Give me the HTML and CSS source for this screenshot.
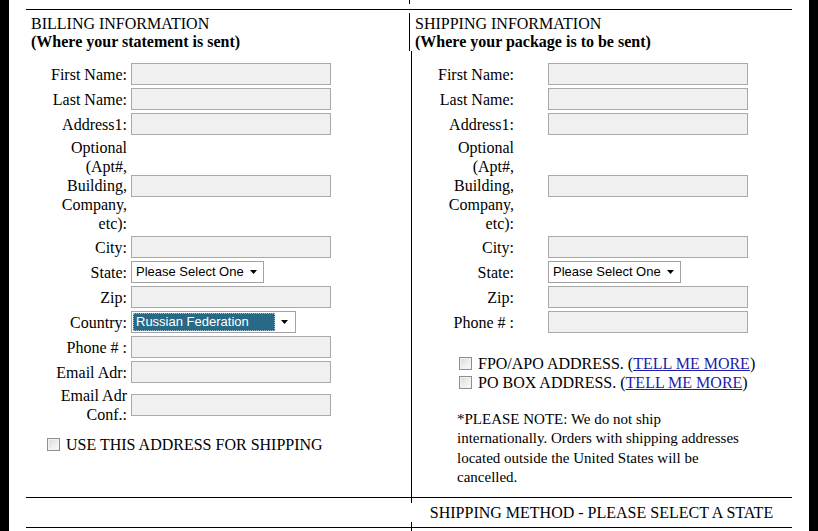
FILE: index.html
```html
<!DOCTYPE html>
<html lang="en">
<head>
<meta charset="utf-8">
<title>Billing and Shipping Information</title>
<link rel="stylesheet" href="styles.css">
</head>
<body>
<div class="page">
  <div class="stub stub-top"></div>
  <div class="rule"></div>
  <div class="columns">
    <section class="billing">
      <div class="sec-head">
        <div class="sec-title">BILLING INFORMATION</div>
        <div class="sec-sub">(Where your statement is sent)</div>
      </div>
      <div class="form form-billing">
        <label class="lbl">First Name:</label><input class="field" type="text">
        <label class="lbl">Last Name:</label><input class="field" type="text">
        <label class="lbl">Address1:</label><input class="field" type="text">
        <label class="lbl">Optional (Apt#, Building, Company, etc):</label><input class="field" type="text">
        <label class="lbl">City:</label><input class="field" type="text">
        <label class="lbl">State:</label>
        <span class="select select-state"><span class="select-text">Please Select One</span><svg class="arrow" width="7" height="4" viewBox="0 0 7 4"><path d="M0 0H7L3.5 4Z" fill="#000"/></svg></span>
        <label class="lbl">Zip:</label><input class="field" type="text">
        <label class="lbl">Country:</label>
        <span class="select select-country"><span class="select-text selected">Russian Federation</span><svg class="arrow" width="7" height="4" viewBox="0 0 7 4"><path d="M0 0H7L3.5 4Z" fill="#000"/></svg></span>
        <label class="lbl">Phone # :</label><input class="field" type="text">
        <label class="lbl">Email Adr:</label><input class="field" type="text">
        <label class="lbl">Email Adr Conf.:</label><input class="field" type="text">
      </div>
      <div class="check-row use-ship"><span class="checkbox"></span><span class="check-text">USE THIS ADDRESS FOR SHIPPING</span></div>
    </section>
    <section class="shipping">
      <div class="sec-head ship-head">
        <div class="sec-title">SHIPPING INFORMATION</div>
        <div class="sec-sub">(Where your package is to be sent)</div>
      </div>
      <div class="ship-body">
        <div class="form form-shipping">
          <label class="lbl">First Name:</label><input class="field" type="text">
          <label class="lbl">Last Name:</label><input class="field" type="text">
          <label class="lbl">Address1:</label><input class="field" type="text">
          <label class="lbl">Optional (Apt#, Building, Company, etc):</label><input class="field" type="text">
          <label class="lbl">City:</label><input class="field" type="text">
          <label class="lbl">State:</label>
          <span class="select select-state"><span class="select-text">Please Select One</span><svg class="arrow" width="7" height="4" viewBox="0 0 7 4"><path d="M0 0H7L3.5 4Z" fill="#000"/></svg></span>
          <label class="lbl">Zip:</label><input class="field" type="text">
          <label class="lbl">Phone # :</label><input class="field" type="text">
        </div>
        <div class="ship-checks">
          <div class="check-row"><span class="checkbox"></span><span class="check-text">FPO/APO ADDRESS. (<a href="#" class="link">TELL ME MORE</a>)</span></div>
          <div class="check-row"><span class="checkbox"></span><span class="check-text">PO BOX ADDRESS. (<a href="#" class="link">TELL ME MORE</a>)</span></div>
        </div>
        <p class="note">*PLEASE NOTE: We do not ship internationally. Orders with shipping addresses located outside the United States will be cancelled.</p>
      </div>
    </section>
  </div>
  <div class="rule"></div>
  <div class="method">
    <div class="method-blank"></div>
    <div class="method-cell">SHIPPING METHOD - PLEASE SELECT A STATE</div>
  </div>
  <div class="rule"></div>
  <div class="stub stub-bottom"></div>
</div>
</body>
</html>
```

FILE: styles.css
```css
html, body {
  margin: 0;
  padding: 0;
  background: #000;
}

body {
  font-family: "Liberation Serif", "Times New Roman", serif;
  font-size: 16px;
  color: #000;
}

.page {
  width: 800px;
  height: 531px;
  margin-left: 9px;
  padding: 0 17px;
  box-sizing: border-box;
  background: #fff;
  overflow: hidden;
}

.rule {
  height: 1px;
  background: #000;
}

.stub-top {
  height: 9px;
  background: linear-gradient(#000, #000) 383px 0 / 1px 4px no-repeat;
}

.stub-bottom {
  height: 4px;
  background: linear-gradient(#000, #000) 385px 0 / 1px 100% no-repeat;
}

.columns {
  display: grid;
  grid-template-columns: 383px 383px;
}

/* section headers */
.sec-head {
  line-height: 18px;
}

.sec-sub {
  font-weight: bold;
}

.billing {
  padding: 5px 0 0 5px;
}

.shipping {
  display: flex;
  flex-direction: column;
}

.ship-head {
  margin-top: 3px;
  padding: 2px 0 0 5px;
  border-left: 1px solid #000;
}

.ship-body {
  flex: 1;
  margin-left: 2px;
  border-left: 1px solid #000;
  padding-bottom: 10px;
}

/* forms */
.form {
  display: grid;
  grid-template-columns: 76px 200px;
  row-gap: 3px;
  align-items: center;
  margin-top: 12px;
}

.form-billing {
  column-gap: 4px;
  margin-left: 20px;
}

.form-shipping {
  column-gap: 34px;
  margin-left: 26px;
}

.lbl {
  text-align: right;
  line-height: 19px;
}

.field {
  width: 200px;
  height: 22px;
  margin: 0;
  padding: 0 2px;
  box-sizing: border-box;
  border: 1px solid #a9a9a9;
  background: #f0f0f0;
  font-family: "Liberation Sans", Arial, sans-serif;
  font-size: 13px;
}

.select {
  justify-self: start;
  display: flex;
  align-items: center;
  height: 22px;
  box-sizing: border-box;
  border: 1px solid #a3a3a3;
  background: #fff;
  font-family: "Liberation Sans", Arial, sans-serif;
  font-size: 13px;
  line-height: 16px;
  padding: 1px;
}

.select-state {
  width: 133px;
}

.select-country {
  width: 165px;
}

.select-text {
  padding-left: 3px;
  flex: 1;
  white-space: nowrap;
}

.select-text.selected {
  align-self: stretch;
  display: flex;
  align-items: center;
  background: #276987;
  color: #fff;
  outline: 1px dotted #9fbfd0;
  outline-offset: -1px;
  margin-right: 6px;
}

.arrow {
  display: block;
  margin-right: 5px;
}

.select-country .arrow {
  margin-right: 6px;
}

/* checkboxes */
.check-row {
  display: flex;
  align-items: center;
  line-height: 19px;
}

.checkbox {
  width: 13px;
  height: 13px;
  box-sizing: border-box;
  border: 1px solid #8e8f8f;
  background: linear-gradient(135deg, #d8d8d8 0%, #eeeeee 55%, #fbfbfb 100%);
  box-shadow: inset 0 0 0 1px #f2f2f2;
  flex: none;
}

.check-text {
  margin-left: 6px;
  white-space: nowrap;
}

.use-ship {
  margin-top: 11px;
  margin-left: 16px;
}

.ship-checks {
  margin-top: 21px;
  margin-left: 47px;
}

.link {
  color: #1c1ca8;
  text-decoration: underline;
}

.note {
  margin: 18px 0 0 45px;
  width: 290px;
  font-size: 15px;
  line-height: 19.25px;
}

/* shipping method row */
.method {
  display: grid;
  grid-template-columns: 385px 1fr;
}

.method-cell {
  padding: 5px 0;
  line-height: 19px;
  text-align: center;
  background:
    linear-gradient(#000, #000) left top / 1px 5px no-repeat,
    linear-gradient(#000, #000) left bottom / 1px 5px no-repeat;
}
```
